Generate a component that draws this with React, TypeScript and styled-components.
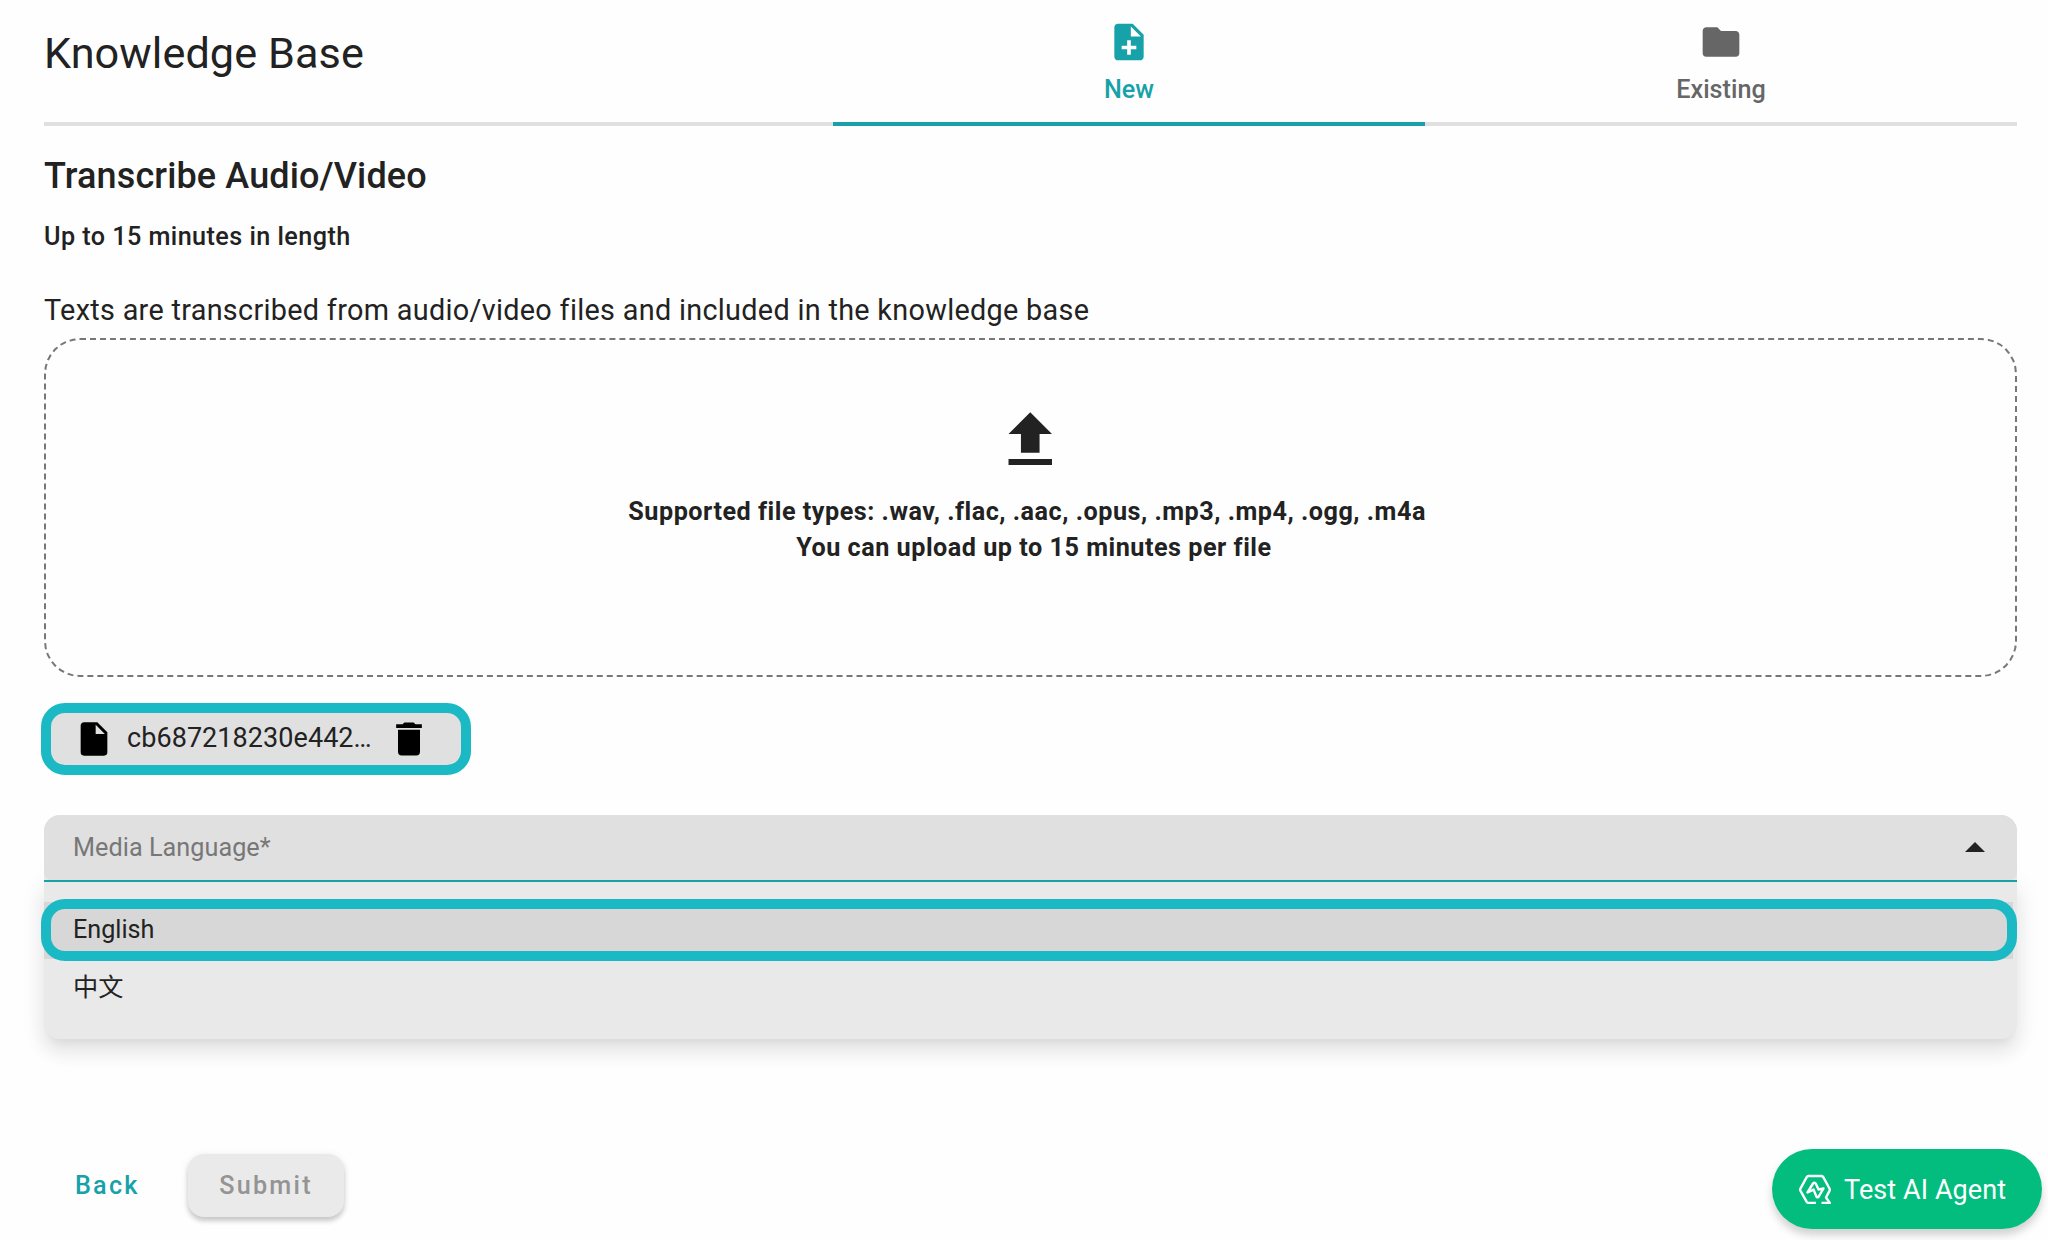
import React from 'react';
import styled, { createGlobalStyle } from 'styled-components';

const GlobalStyle = createGlobalStyle`
  *, *::before, *::after { box-sizing: border-box; }
  body {
    margin: 0;
    background: #fefefe;
    color: #222;
    font-family: Roboto, "Noto Sans CJK SC", sans-serif;
    -webkit-font-smoothing: antialiased;
  }
  button { font: inherit; border: 0; background: none; padding: 0; }
  svg { display: block; flex: none; }
`;

const Page = styled.main`
  display: flex;
  flex-direction: column;
  height: 1240px;
  overflow: hidden;
  padding: 0 31px 0 44px;
`;

const Header = styled.header`
  display: flex;
  height: 126px;
  flex: none;
`;

const Title = styled.h1`
  flex: 1;
  margin: 0;
  padding-top: 25.6px;
  border-bottom: 4px solid #e0e0e0;
  font-size: 43.2px;
  line-height: 56px;
  font-weight: 400;
  letter-spacing: 0.08px;
`;

const Tab = styled.button<{ $active?: boolean }>`
  display: flex;
  flex-direction: column;
  align-items: center;
  width: 592px;
  padding-top: 19.5px;
  color: ${p => (p.$active ? '#17a2a9' : '#666')};
  border-bottom: 4px solid ${p => (p.$active ? '#17a2a9' : '#e0e0e0')};
  font-size: 25.2px;
  line-height: 32px;
  font-weight: 500;
  gap: 10.5px;
`;

const SectionTitle = styled.h2`
  margin: 28px 0 0;
  font-size: 36px;
  line-height: 44px;
  font-weight: 500;
  letter-spacing: 0.13px;
`;

const Limit = styled.p`
  margin: 23px 0 0;
  font-size: 25.2px;
  line-height: 32px;
  font-weight: 500;
  letter-spacing: 0.44px;
`;

const Description = styled.p`
  margin: 37px 0 0;
  font-size: 28.8px;
  line-height: 40px;
  letter-spacing: 0.31px;
`;

const DropZone = styled.section`
  display: flex;
  flex-direction: column;
  align-items: center;
  flex: none;
  height: 339px;
  margin-top: 8px;
  padding-top: 63px;
  border: 2px dashed #777;
  border-radius: 36px;
`;

const DropHint = styled.p`
  margin: 16px 0 0;
  text-align: center;
  white-space: pre;
  font-size: 25.2px;
  line-height: 36px;
  font-weight: 700;
  letter-spacing: 0.51px;
`;

const FileChip = styled.div`
  display: flex;
  align-items: center;
  flex: none;
  width: 430px;
  height: 72px;
  margin: 26px 0 0 -3px;
  padding-left: 23px;
  border: 10px solid #1ab9c4;
  border-radius: 24px;
  background: #e0e0e0;
`;

const FileName = styled.span`
  width: 246px;
  margin: 0 14px 2px 13px;
  font-size: 27px;
  line-height: 40px;
  letter-spacing: 0.06px;
  white-space: nowrap;
`;

const Select = styled.div`
  flex: none;
  height: 224px;
  margin-top: 40px;
`;

const FieldFrame = styled.div`
  position: relative;
  z-index: 1;
  border-bottom: 2px solid #17a2a9;
  border-radius: 16px 16px 0 0;
  background: #e9e9e9;
`;

const Field = styled.div`
  display: flex;
  align-items: center;
  justify-content: space-between;
  height: 65px;
  padding: 0 32px 0 29px;
  border-radius: 16px 16px 7px 7px;
  background: #e0e0e0;
  color: #777;
  font-size: 25.2px;
  line-height: 32px;
  letter-spacing: 0.05px;
`;

const Arrow = styled.svg`
  margin-bottom: 2px;
`;

const Options = styled.ul`
  list-style: none;
  height: 157px;
  margin: 0;
  padding: 19.6px 4px 0 0;
  border-radius: 0 0 16px 16px;
  background: #e9e9e9;
  box-shadow: 0 9px 9px -5px rgba(0, 0, 0, 0.05), 0 14px 18px 2px rgba(0, 0, 0, 0.06),
    0 5px 25px 4px rgba(0, 0, 0, 0.05);
`;

const Option = styled.li<{ $selected?: boolean }>`
  position: relative;
  display: flex;
  align-items: center;
  height: 57.6px;
  padding-left: 29px;
  background: ${p => (p.$selected ? '#d7d7d7' : 'transparent')};
  font-size: 25.2px;
  line-height: 32px;
`;

const HighlightRing = styled.span`
  position: absolute;
  top: -2.6px;
  left: -3px;
  right: -4px;
  height: 62px;
  border: 10px solid #1ab9c4;
  border-radius: 24px;
`;

const Footer = styled.footer`
  display: flex;
  align-items: flex-start;
  margin-top: 115px;
`;

const BackButton = styled.button`
  width: 144px;
  height: 63px;
  padding-left: 31px;
  text-align: left;
  color: #17a2a9;
  font-size: 25.2px;
  font-weight: 500;
  letter-spacing: 2.2px;
`;

const SubmitButton = styled.button`
  width: 156px;
  height: 63px;
  border-radius: 16px;
  background: #eaeaea;
  color: #949494;
  font-size: 25.2px;
  font-weight: 500;
  letter-spacing: 2.25px;
  box-shadow: 0 4px 5px rgba(0, 0, 0, 0.18), 0 1px 8px rgba(0, 0, 0, 0.08);
`;

const AgentButton = styled.button`
  display: flex;
  align-items: center;
  gap: 12px;
  width: 270px;
  height: 80px;
  margin: -5px -25px 0 auto;
  padding-left: 26px;
  border-radius: 40px;
  background: #03bd7e;
  color: #fff;
  font-size: 27px;
  letter-spacing: 0.08px;
  box-shadow: 0 6px 8px rgba(0, 0, 0, 0.18);
`;

const AgentLabel = styled.span`
  padding-top: 2px;
`;

type IconProps = { size: number; d: string; color?: string };

const Icon = ({ size, d, color = 'currentColor' }: IconProps) => (
  <svg width={size} height={size} viewBox="0 0 24 24" fill={color}>
    <path d={d} />
  </svg>
);

const paths = {
  filePlus:
    'M14 2H6c-1.100 0-2 .9-2 2v16c0 1.100.9 2 2 2h12c1.100 0 2-.9 2-2V8l-6-6zm2 14h-3v3h-2v-3H8v-2h3v-3h2v3h3v2zm-3-7V3.500L18.500 9H13z',
  file: 'M13 9V3.500L18.500 9M6 2c-1.110 0-2 .89-2 2v16a2 2 0 0 0 2 2h12a2 2 0 0 0 2-2V8l-6-6H6z',
  folder: 'M10 4H4c-1.110 0-2 .89-2 2v12a2 2 0 0 0 2 2h16a2 2 0 0 0 2-2V8c0-1.110-.9-2-2-2h-8l-2-2z',
  upload: 'M9 16v-6H5l7-7 7 7h-4v6H9m-4 4v-2h14v2H5z',
  trash: 'M19 4h-3.500l-1-1h-5l-1 1H5v2h14M6 19a2 2 0 0 0 2 2h8a2 2 0 0 0 2-2V7H6v12z',
};

const AgentIcon = () => (
  <svg width="34" height="31" viewBox="0 0 34 31" fill="none" stroke="#fff" strokeWidth="2.400" strokeLinejoin="round">
    <path d="M18 28.900H10.500Q9.300 28.900 8.700 27.900L2.400 16.600Q1.900 15.600 2.400 14.700L8.700 3.100Q9.300 2 10.500 2H23.500Q24.700 2 25.300 3.100L31.600 14.700Q32.100 15.600 31.600 16.600L28 23.500L31.800 28.900H23.500" />
    <path d="M9.500 18.500L15 9.500Q16.600 8 17.900 9.700L20.500 15.500L25.500 14.500L20.500 22.800Q19.200 24 18.400 22.600L15.600 15.600Z" />
  </svg>
);

export default function App() {
  return (
    <>
      <GlobalStyle />
      <Page>
        <Header>
          <Title>Knowledge Base</Title>
          <Tab $active>
            <Icon size={44} d={paths.filePlus} />
            New
          </Tab>
          <Tab>
            <Icon size={44} d={paths.folder} />
            Existing
          </Tab>
        </Header>
        <SectionTitle>Transcribe Audio/Video</SectionTitle>
        <Limit>Up to 15 minutes in length</Limit>
        <Description>Texts are transcribed from audio/video files and included in the knowledge base</Description>
        <DropZone>
          <Icon size={74.5} d={paths.upload} color="#222" />
          <DropHint>
            {'Supported file types: .wav, .flac, .aac, .opus, .mp3, .mp4, .ogg, .m4a '}
            <br />
            {' You can upload up to 15 minutes per file'}
          </DropHint>
        </DropZone>
        <FileChip>
          <Icon size={40} d={paths.file} color="#000" />
          <FileName>cb687218230e442…</FileName>
          <Icon size={44} d={paths.trash} color="#000" />
        </FileChip>
        <Select>
          <FieldFrame>
            <Field>
              Media Language*
              <Arrow width="20" height="10" viewBox="0 0 20 10" fill="#222">
                <path d="M0 10 10 0l10 10z" />
              </Arrow>
            </Field>
          </FieldFrame>
          <Options>
            <Option $selected>
              English
              <HighlightRing />
            </Option>
            <Option>中文</Option>
          </Options>
        </Select>
        <Footer>
          <BackButton>Back</BackButton>
          <SubmitButton>Submit</SubmitButton>
          <AgentButton>
            <AgentIcon />
            <AgentLabel>Test AI Agent</AgentLabel>
          </AgentButton>
        </Footer>
      </Page>
    </>
  );
}
